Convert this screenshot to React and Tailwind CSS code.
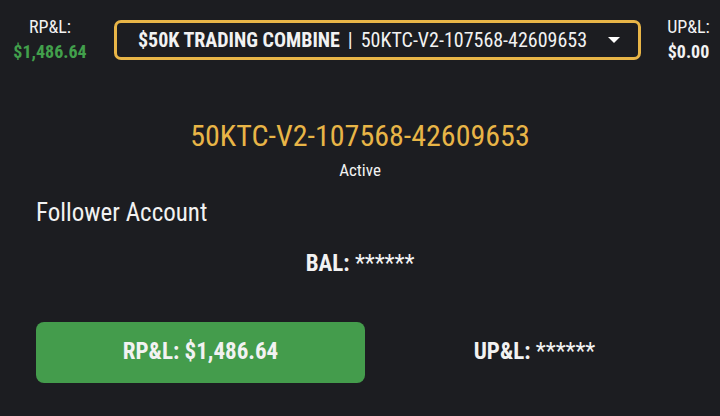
const cond = '[font-stretch:75%]';

export default function App() {
  return (
    <div
      className={`w-[720px] h-[416px] bg-[#1c1d21] text-[#f2f2f2] overflow-hidden ${cond}`}
      style={{ fontFamily: 'Roboto, sans-serif' }}
    >
      {/* top bar */}
      <div className="flex items-center pt-[17px]">
        <div className="w-[100px] text-center">
          <div className="text-[18px] leading-[20px]">RP&amp;L:</div>
          <div className="text-[18px] leading-[22px] font-bold text-[#42a04c] mt-[4px]">$1,486.64</div>
        </div>
        <div className="ml-[14px] w-[527px] h-[40px] border-[3px] border-[#e8b547] rounded-[7px] flex items-center pl-[21px] pr-[18px]">
          <div className="text-[20px] leading-none whitespace-nowrap">
            <span className="font-bold">$50K TRADING COMBINE</span>
            <span className="mx-[8px]">|</span>
            <span>50KTC-V2-107568-42609653</span>
          </div>
          <div className="ml-auto w-0 h-0 border-l-[6px] border-r-[6px] border-t-[6px] border-l-transparent border-r-transparent border-t-white" />
        </div>
        <div className="flex-1 text-center pl-[16px]">
          <div className="text-[18px] leading-[20px]">UP&amp;L:</div>
          <div className="text-[18px] leading-[22px] font-bold mt-[4px]">$0.00</div>
        </div>
      </div>

      {/* account id */}
      <div className="mt-[55px] text-center text-[30px] leading-[36px] text-[#e8b547]">50KTC-V2-107568-42609653</div>
      <div className="mt-[6px] text-center text-[17px] leading-[20px]">Active</div>

      <div className="mt-[18px] pl-[36px] text-[25px] leading-[30px]">Follower Account</div>

      <div className="mt-[23px] text-center text-[23px] leading-[26px]">
        <span className="font-bold">BAL:</span> ******
      </div>

      {/* pnl row */}
      <div className="mt-[45px] flex items-center pl-[36px] pr-[16px]">
        <div className="w-[329px] h-[61px] rounded-[8px] bg-[#449c4c] flex items-center justify-center text-[23px] font-bold">
          RP&amp;L: $1,486.64
        </div>
        <div className="flex-1 text-center text-[23px]">
          <span className="font-bold">UP&amp;L:</span> ******
        </div>
      </div>
    </div>
  );
}
